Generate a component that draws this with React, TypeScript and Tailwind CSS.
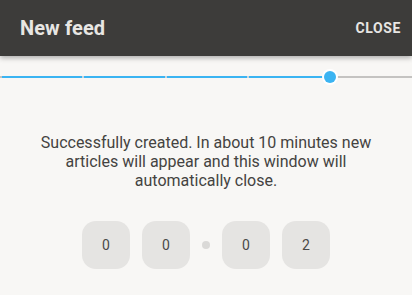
const ticks = [82, 165, 247];

const Digit = ({ value }: { value: string }) => (
  <div className="w-12 h-12 rounded-[14px] bg-[#e5e4e2] flex items-center justify-center text-[14px] text-[#4a4948]">
    {value}
  </div>
);

export default function App() {
  return (
    <div className="w-[412px] h-[295px] bg-[#f8f7f5] overflow-hidden" style={{ fontFamily: "Roboto, 'Noto Sans', sans-serif" }}>
      {/* Header */}
      <div className="h-14 bg-[#3d3c3a] flex items-center justify-between pl-5 pr-[11px] shadow-[0_2px_5px_rgba(0,0,0,0.3)] relative z-10">
        <h1 className="text-[20px] font-bold text-[#e8e6e3] tracking-[0.1px]">New feed</h1>
        <button className="text-[14px] font-bold text-[#e8e6e3] tracking-[0.6px]">CLOSE</button>
      </div>

      {/* Slider */}
      <div className="relative h-[42px]">
        <div className="absolute left-0 top-[20px] h-[2px] w-[330px] bg-[#3bb4f2]" />
        <div className="absolute left-[330px] right-0 top-[20px] h-[2px] bg-[#c4c3c1]" />
        <div className="absolute left-0 top-[20px] h-[2px] w-[2px] bg-[#c4c3c1]" />
        {ticks.map((x) => (
          <div key={x} className="absolute top-[20px] h-[2px] w-[2px] bg-[#c9d6de]" style={{ left: x }} />
        ))}
        <div className="absolute left-[322px] top-[13px] w-4 h-4 rounded-full bg-white flex items-center justify-center">
          <div className="w-3 h-3 rounded-full bg-[#3bb4f2]" />
        </div>
      </div>

      {/* Message */}
      <p className="mt-[35px] px-9 text-center text-[16px] leading-[19px] text-[#444341]">
        Successfully created. In about 10 minutes new articles will appear and this window will automatically close.
      </p>

      {/* Countdown */}
      <div className="mt-[31px] flex items-center justify-center gap-3">
        <Digit value="0" />
        <Digit value="0" />
        <div className="w-2 h-2 rounded-full bg-[#dad9d7]" />
        <Digit value="0" />
        <Digit value="2" />
      </div>
    </div>
  );
}
